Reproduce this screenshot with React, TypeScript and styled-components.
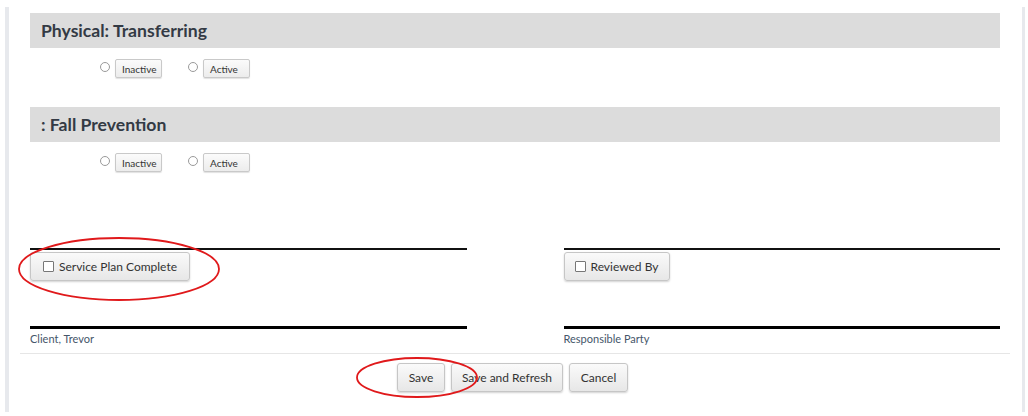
import React from "react";
import styled, { createGlobalStyle } from "styled-components";

const Global = createGlobalStyle`
  html, body { margin: 0; padding: 0; background: #fff; }
  body { font-family: Lato, "Open Sans", Arial, sans-serif; color: #333; }
`;

const Page = styled.div`
  width: 1028px;
  height: 416px;
  box-sizing: border-box;
  padding: 7px 3px 4px 5px;
  display: flex;
`;

const Frame = styled.div`
  flex: 1;
  border-left: 4px solid #e7e9ed;
  border-right: 3px solid #e7e9ed;
  display: flex;
  flex-direction: column;
`;

const Content = styled.div`
  margin: 0 12px 0 11px;
  display: flex;
  flex-direction: column;
`;

const Sections = styled.div`
  padding: 6px 10px 0;
  display: flex;
  flex-direction: column;
`;

const Section = styled.section<{ $gap?: number }>`
  margin-bottom: ${(p) => p.$gap ?? 0}px;
`;

const Header = styled.h3`
  margin: 0;
  height: 35px;
  background: #dcdcdc;
  display: flex;
  align-items: center;
  padding: 0 11px;
  font-size: 17.6px;
  font-weight: 700;
  color: #333a44;
`;

const RadioRow = styled.div`
  margin-top: 11px;
  padding-left: 70px;
  display: flex;
  align-items: center;
  height: 19px;
`;

const RadioOption = styled.label`
  display: flex;
  align-items: center;
  gap: 5px;
  margin-right: 26px;
`;

const Radio = styled.span`
  width: 8px;
  height: 8px;
  border: 1px solid #9a9a9a;
  border-radius: 50%;
  background: #fff;
  margin-top: -3px;
`;

const SmallButton = styled.span`
  box-sizing: border-box;
  width: 47px;
  height: 19px;
  border: 1px solid #c9c9c9;
  border-radius: 2px;
  background: linear-gradient(#fbfbfb, #ececec);
  box-shadow: 0 1px 1px rgba(0, 0, 0, 0.12);
  font-size: 10px;
  color: #333;
  display: flex;
  align-items: center;
  padding-left: 6px;
  white-space: nowrap;
`;

const Signatures = styled.div`
  display: grid;
  grid-template-columns: 1fr 1fr;
  column-gap: 97px;
  padding: 0 10px;
`;

const SigBlock = styled.div`
  border-top: 2px solid #111;
  padding-top: 2px;
  display: flex;
  flex-direction: column;
  align-items: flex-start;
`;

const SigLine = styled.div`
  align-self: stretch;
  margin-top: 45px;
  height: 3px;
  background: #000;
`;

const SigLabel = styled.div`
  font-size: 11px;
  color: #45566a;
  margin-top: 3px;
  line-height: 14px;
`;

const Annotated = styled.div`
  position: relative;
  display: inline-flex;
`;

const Ellipse = styled.svg<{ $l: number; $t: number }>`
  position: absolute;
  left: ${(p) => p.$l}px;
  top: ${(p) => p.$t}px;
  pointer-events: none;
  overflow: visible;
`;

const Button = styled.button<{ $w?: number }>`
  box-sizing: border-box;
  height: 29px;
  ${(p) => (p.$w ? `width: ${p.$w}px;` : "")}
  padding: 0;
  border: 1px solid #c6c6c6;
  border-radius: 3px;
  background: linear-gradient(#fafafa, #e7e7e7);
  box-shadow: 0 1px 2px rgba(0, 0, 0, 0.18);
  font-family: Lato, "Open Sans", Arial, sans-serif;
  font-size: 12px;
  color: #333;
  display: inline-flex;
  align-items: center;
  justify-content: center;
  gap: 5px;
  white-space: nowrap;
  cursor: pointer;
`;

const Check = styled.span`
  width: 9px;
  height: 9px;
  border: 1px solid #777;
  border-radius: 1px;
  background: #fff;
`;

const Separator = styled.hr`
  margin: 7px 0 0;
  border: 0;
  border-top: 1px solid #e6e6e6;
`;

const Actions = styled.div`
  display: flex;
  justify-content: center;
  gap: 6px;
  margin-top: 9px;
  padding-right: 5px;
`;

const RedEllipse = ({ w, h, l, t }: { w: number; h: number; l: number; t: number }) => (
  <Ellipse $l={l} $t={t} width={w} height={h} viewBox={`0 0 ${w} ${h}`}>
    <ellipse cx={w / 2} cy={h / 2} rx={w / 2 - 1} ry={h / 2 - 1} fill="none" stroke="#e0191b" strokeWidth={1.8} />
  </Ellipse>
);

const Status = () => (
  <RadioRow>
    <RadioOption>
      <Radio />
      <SmallButton>Inactive</SmallButton>
    </RadioOption>
    <RadioOption>
      <Radio />
      <SmallButton>Active</SmallButton>
    </RadioOption>
  </RadioRow>
);

export default function App() {
  return (
    <>
      <Global />
      <Page>
        <Frame>
          <Content>
            <Sections>
              <Section $gap={29}>
                <Header>Physical: Transferring</Header>
                <Status />
              </Section>
              <Section $gap={76}>
                <Header>: Fall Prevention</Header>
                <Status />
              </Section>
            </Sections>
            <Signatures>
              <SigBlock>
                <Annotated>
                  <Button $w={160}>
                    <Check />
                    Service Plan Complete
                  </Button>
                  <RedEllipse w={202} h={64} l={-12} t={-15} />
                </Annotated>
                <SigLine />
                <SigLabel>Client, Trevor</SigLabel>
              </SigBlock>
              <SigBlock>
                <Button $w={106}>
                  <Check />
                  Reviewed By
                </Button>
                <SigLine />
                <SigLabel>Responsible Party</SigLabel>
              </SigBlock>
            </Signatures>
            <Separator />
            <Actions>
              <Annotated>
                <Button $w={48}>Save</Button>
                <RedEllipse w={122} h={41} l={-41} t={-6} />
              </Annotated>
              <Button $w={112}>Save and Refresh</Button>
              <Button $w={59}>Cancel</Button>
            </Actions>
          </Content>
        </Frame>
      </Page>
    </>
  );
}
